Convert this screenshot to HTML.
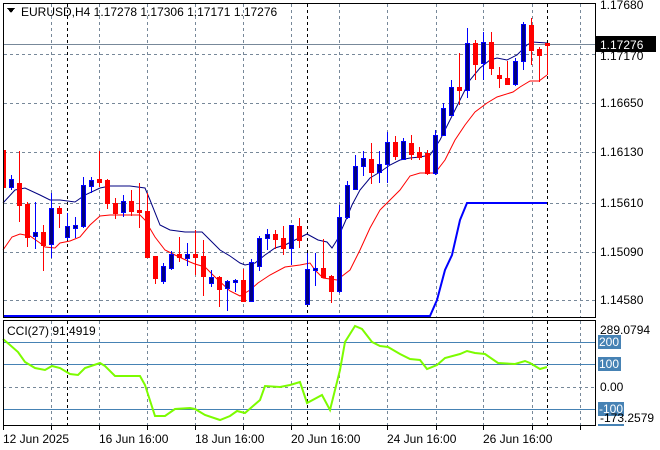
<!DOCTYPE html>
<html><head><meta charset="utf-8"><style>
html,body{margin:0;padding:0;background:#fff;}
svg{display:block;}
text{font-family:"Liberation Sans","DejaVu Sans",sans-serif;font-size:12px;fill:#000;}
</style></head><body>
<svg id="s" width="660" height="450" xmlns="http://www.w3.org/2000/svg" shape-rendering="crispEdges">
<rect width="660" height="450" fill="#fff"/>
<g id="grid"></g>
<line x1="3" y1="44.5" x2="596" y2="44.5" stroke="#778899" stroke-width="1"/>
<g id="ma" shape-rendering="auto" fill="none">
<polyline stroke="#000080" stroke-width="1" points="3,203 15,190 25,188 40,195 50,200 60,200 75,202 85,195 100,188 110,186 130,186 145,188 150,200 160,225 170,230 185,232 202,232 210,240 220,250 230,256 240,263 245,265 255,263 265,255 275,248 285,245 295,240 307,234 318,240 327,242 332,248 337,240 345,222 352,205 360,190 370,178 380,172 390,165 400,160 410,158 420,157 430,155 440,140 450,120 460,100 470,80 480,68 490,60 497,58 507,60 517,55 527,45 532,42 547,43"/>
<polyline stroke="#ff0000" stroke-width="1" points="3,250 12,237 20,234 30,236 40,243 45,247 55,248 60,243 70,241 80,237 90,225 100,216 110,215 140,215 145,220 155,237 165,250 175,255 190,262 195,264 205,267 215,277 230,291 240,296 250,290 258,283 270,275 285,267 300,265 310,263 315,270 323,278 337,280 350,270 360,250 370,228 380,210 390,200 400,190 410,176 420,173 435,173 445,160 455,140 465,125 475,112 487,103 497,97 513,92 520,87 530,81 539,81 547,75"/>
<polyline stroke="#0000ff" stroke-width="2" points="3,316 430,316 437,300 445,270 452,255 460,220 467,203 547,203"/>
</g>
<g id="candles"></g>
<g shape-rendering="crispEdges">
<line x1="3" y1="342.5" x2="596" y2="342.5" stroke="#4682b4"/>
<line x1="3" y1="364.5" x2="596" y2="364.5" stroke="#4682b4"/>
<line x1="3" y1="409.5" x2="596" y2="409.5" stroke="#4682b4"/>
<line x1="3" y1="387.5" x2="596" y2="387.5" stroke="#778899" stroke-dasharray="3,3"/>
</g>
<polyline shape-rendering="auto" fill="none" stroke="#7cfc00" stroke-width="2" points="3,339 10,345 18,352 25,362 35,368 45,370 52,366 60,368 70,374 78,375 85,368 100,363 105,366 115,376 140,376 145,385 155,416 165,416 175,409 190,408 195,409 205,415 220,420 230,416 237,411 245,413 260,400 265,386 280,387 290,385 300,382 307,403 322,395 330,410 340,370 345,342 355,326 362,329 372,342 380,346 388,347 400,354 410,359 420,360 427,369 437,365 445,358 460,354 467,351 475,353 485,354 498,363 515,364 525,361 530,363 540,369 547,367"/>
<rect x="3.5" y="3.5" width="592" height="314" fill="none" stroke="#000"/>
<rect x="3.5" y="320.5" width="592" height="105" fill="none" stroke="#000"/>
<g id="ticks"></g>
<polygon points="7,8 15,8 11,13" fill="#000"/>
<text x="21" y="16">EURUSD,H4  1.17278 1.17306 1.17171 1.17276</text>
<text x="7" y="335">CCI(27) 91.4919</text>
<text x="600" y="9">1.17680</text>
<rect x="596" y="36" width="60" height="16" fill="#000"/>
<text x="600" y="49" style="fill:#fff">1.17276</text>
<text x="600" y="60">1.17170</text>
<text x="600" y="107">1.16650</text>
<text x="600" y="156">1.16130</text>
<text x="600" y="207">1.15610</text>
<text x="600" y="256">1.15090</text>
<text x="600" y="304">1.14580</text>
<text x="600" y="334">289.0794</text>
<rect x="598" y="335" width="23" height="14" fill="#4682b4"/><text x="599" y="346" style="fill:#fff">200</text>
<rect x="598" y="357" width="23" height="14" fill="#4682b4"/><text x="599" y="368" style="fill:#fff">100</text>
<text x="600" y="391">0.00</text>
<rect x="598" y="402" width="26" height="14" fill="#4682b4"/><text x="599" y="413" style="fill:#fff">-100</text>
<rect x="598" y="424" width="26" height="2" fill="#4682b4"/>
<text x="600" y="422">-173.2579</text>
<text x="3" y="443">12 Jun 2025</text>
<text x="99" y="443">16 Jun 16:00</text>
<text x="195" y="443">18 Jun 16:00</text>
<text x="291" y="443">20 Jun 16:00</text>
<text x="387" y="443">24 Jun 16:00</text>
<text x="483" y="443">26 Jun 16:00</text>
</svg>
<script>
var NS="http://www.w3.org/2000/svg";
function el(p,t,a){var e=document.createElementNS(NS,t);for(var k in a)e.setAttribute(k,a[k]);p.appendChild(e);return e;}
var g=document.getElementById("grid");
var vx=[51,99,147,195,243,291,339,387,436,483,532,580];
vx.forEach(function(x){
 el(g,"line",{x1:x+.5,y1:4,x2:x+.5,y2:318,stroke:"#778899","stroke-dasharray":"3,3"});
 el(g,"line",{x1:x+.5,y1:321,x2:x+.5,y2:426,stroke:"#778899","stroke-dasharray":"3,3"});
});
[67,307,547].forEach(function(x){
 el(g,"line",{x1:x+.5,y1:4,x2:x+.5,y2:318,stroke:"#000","stroke-dasharray":"3,3"});
 el(g,"line",{x1:x+.5,y1:321,x2:x+.5,y2:426,stroke:"#000","stroke-dasharray":"3,3"});
});
[54,103,152,203,252,300].forEach(function(y){
 el(g,"line",{x1:4,y1:y+.5,x2:596,y2:y+.5,stroke:"#778899","stroke-dasharray":"3,3"});
});
var t=document.getElementById("ticks");
[3,51,99,147,195,243,291,339,387,436,483,532,580].forEach(function(x){el(t,"line",{x1:x+.5,y1:426,x2:x+.5,y2:430,stroke:"#000"});});
var C=[[150,187,148,197],[187,179,175,190],[183,205,151,222],[204,237,202,247],[236,232,202,249],[232,245,225,271],[244,208,193,258],[208,213,206,228],[237,226,213,240],[228,225,217,238],[226,185,177,228],[186,180,177,193],[179,182,151,187],[180,203,179,209],[203,213,198,219],[212,201,195,217],[201,211,190,216],[210,212,183,228],[211,257,193,258],[256,278,256,284],[281,266,263,284],[268,254,251,270],[254,257,237,262],[258,254,243,266],[254,257,230,275],[256,276,240,296],[283,277,270,287],[277,289,276,307],[288,281,280,311],[282,280,279,292],[280,301,269,301],[301,262,259,301],[266,238,236,271],[238,234,229,250],[234,239,230,249],[238,248,226,255],[248,225,225,265],[226,240,218,248],[304,269,253,305],[270,268,253,286],[268,277,239,278],[276,291,275,303],[291,217,205,293],[217,185,181,219],[189,166,155,190],[166,158,151,176],[159,172,143,184],[172,164,151,183],[164,142,132,183],[142,156,136,160],[159,141,138,160],[143,154,135,160],[152,157,147,160],[153,173,150,175],[173,135,130,175],[135,108,103,136],[115,87,80,116],[87,90,53,105],[90,43,28,98],[43,64,40,80],[63,42,32,80],[42,68,32,75],[75,78,67,88],[78,84,61,85],[84,61,58,86],[61,24,22,70],[25,50,18,65],[49,55,47,82],[43,45,43,75]];
var cg=document.getElementById("candles");
C.forEach(function(c,i){
 var x=3+8*i, o=c[0],cl=c[1],h=c[2],l=c[3];
 var bull=cl<o, col=bull?"#000080":"#ff0000", wc=bull?"#0000ff":"#ff0000";
 el(cg,"line",{x1:x+.5,y1:h,x2:x+.5,y2:l,stroke:wc});
 var top=Math.min(o,cl),bh=Math.max(2,Math.abs(o-cl));
 var x0=Math.max(4,x-2);
 el(cg,"rect",{x:x0+.5,y:top+.5,width:x+2-x0,height:bh,fill:col,stroke:wc,"stroke-width":"1"});
});
</script>
</body></html>
